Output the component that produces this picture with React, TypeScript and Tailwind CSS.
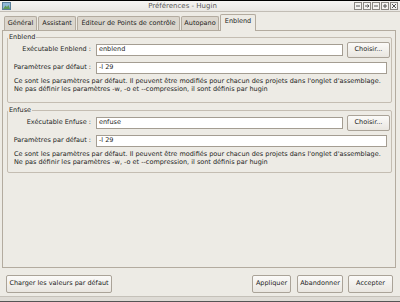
import type React from "react"

const font = { fontFamily: '"DejaVu Sans", "Liberation Sans", sans-serif' }

function WinButton({ children }: { children: React.ReactNode }) {
  return (
    <div className="w-[8px] h-[8px] border border-[#8a8782] bg-[#f4f3f1] flex items-center justify-center">
      <svg width="6" height="6" viewBox="0 0 6 6" className="text-[#555]">
        {children}
      </svg>
    </div>
  )
}

function Tab({ label, width, active }: { label: string; width: string; active?: boolean }) {
  if (active) {
    return (
      <div
        className={`${width} h-[17px] -mb-px relative z-10 bg-[#edebe5] border border-b-0 border-[#b3ab9f] rounded-t-[2px] flex items-center justify-center pb-[2px]`}
      >
        {label}
      </div>
    )
  }
  return (
    <div
      className={`${width} h-[14px] bg-[#dbd6cd] border border-b-0 border-[#b3ab9f] rounded-t-[2px] flex items-center justify-center`}
    >
      {label}
    </div>
  )
}

function Button({ label, className = "" }: { label: string; className?: string }) {
  return (
    <div
      className={`flex items-center justify-center rounded-[2px] border border-[#aaa398] bg-gradient-to-b from-[#fbfaf8] to-[#e9e6e0] ${className}`}
    >
      {label}
    </div>
  )
}

function Group({ title, exeLabel, exe, className }: { title: string; exeLabel: string; exe: string; className: string }) {
  return (
    <fieldset className={`border border-[#c4bdb2] rounded-[2px] pl-0 pr-[1px] ${className}`}>
      <legend className="ml-[0px] px-[1px] h-[8px] leading-[8px]">{title}</legend>
      <div className="flex items-center h-[16px] mt-[1px]">
        <div className="w-[83px] text-right">{exeLabel}</div>
        <div className="ml-[5px] flex-1 h-[12px] bg-white border border-[#a49d92] flex items-center px-[2px]">{exe}</div>
        <Button label="Choisir..." className="ml-[4px] w-[43px] h-[16px]" />
      </div>
      <div className="flex items-center h-[12px] mt-[4px] pr-[3px]">
        <div className="w-[83px] text-right">Paramètres par défaut :</div>
        <div className="ml-[5px] flex-1 h-[12px] bg-white border border-[#a49d92] flex items-center px-[2px]">-l 29</div>
      </div>
      <div className="mt-[3px] ml-[6px] leading-[8px]">
        <div>
          Ce sont les paramètres par défaut. Il peuvent être modifiés pour chacun des projets dans l'onglet d'assemblage.
        </div>
        <div>Ne pas définir les paramètres -w, -o et --compression, il sont définis par hugin</div>
      </div>
    </fieldset>
  )
}

export default function App() {
  return (
    <div className="w-[400px] h-[302px] bg-[#edebe5] overflow-hidden text-[6.5px] text-[#1c1c1c] flex flex-col" style={font}>
      {/* title bar */}
      <div className="h-[12px] shrink-0 border-t border-black border-b border-b-[#c2bdb5] bg-gradient-to-b from-[#f6f5f3] to-[#e9e7e3] flex items-center pl-[2px] pr-[2px]">
        <svg width="9" height="8" viewBox="0 0 9 8">
          <rect x="0.5" y="0.5" width="8" height="7" fill="#8fb8d8" stroke="#5a7f99" strokeWidth="1" />
          <path d="M1 7 L3.5 3.5 L5 5 L6.5 3 L8 7 Z" fill="#5f9a5a" />
        </svg>
        <div className="flex-1 text-center text-[#5a5a5a] text-[7px]">Préférences - Hugin</div>
        <div className="flex gap-[1px]">
          <WinButton>
            <path d="M1 3 H5" stroke="currentColor" strokeWidth="1" />
          </WinButton>
          <WinButton>
            <path d="M1 3 H5 M3.5 1.5 L5 3 L3.5 4.5" stroke="currentColor" strokeWidth="1" fill="none" />
          </WinButton>
          <WinButton>
            <path d="M1 3 H5" stroke="currentColor" strokeWidth="1" />
          </WinButton>
          <WinButton>
            <path d="M1 3 H5 M3 1 V5" stroke="currentColor" strokeWidth="1" />
          </WinButton>
          <WinButton>
            <path d="M1 1 L5 5 M5 1 L1 5" stroke="currentColor" strokeWidth="1" />
          </WinButton>
        </div>
      </div>

      {/* tabs */}
      <div className="h-[18px] shrink-0 flex items-end pl-[4px] gap-[1px]">
        <Tab label="Général" width="w-[33px]" />
        <Tab label="Assistant" width="w-[38px]" />
        <Tab label="Éditeur de Points de contrôle" width="w-[103px]" />
        <Tab label="Autopano" width="w-[38px]" />
        <Tab label="Enblend" width="w-[36px]" active />
      </div>

      {/* panel */}
      <div className="ml-[2px] w-[394px] h-[238px] shrink-0 border border-[#b3ab9f] pl-[4px] pr-[3px] pt-[2px]">
        <Group title="Enblend" exeLabel="Exécutable Enblend :" exe="enblend" className="pb-[9px]" />
        <Group title="Enfuse" exeLabel="Exécutable Enfuse :" exe="enfuse" className="mt-[3px] pb-[6px]" />
      </div>

      {/* buttons */}
      <div className="mt-[7px] h-[18px] shrink-0 flex items-center pl-[6px] pr-[7px]">
        <Button label="Charger les valeurs par défaut" className="w-[106px] h-[18px]" />
        <div className="flex-1" />
        <Button label="Appliquer" className="w-[39px] h-[18px]" />
        <Button label="Abandonner" className="ml-[6px] w-[46px] h-[18px]" />
        <Button label="Accepter" className="ml-[5px] w-[45px] h-[18px] border-[#7e776d] border-[1.5px]" />
      </div>

      <div className="mt-[3px] h-px bg-[#c5c1b9] shrink-0" />
      <div className="flex-1 bg-[#dedbd5] border-b border-[#555]" />
    </div>
  )
}
